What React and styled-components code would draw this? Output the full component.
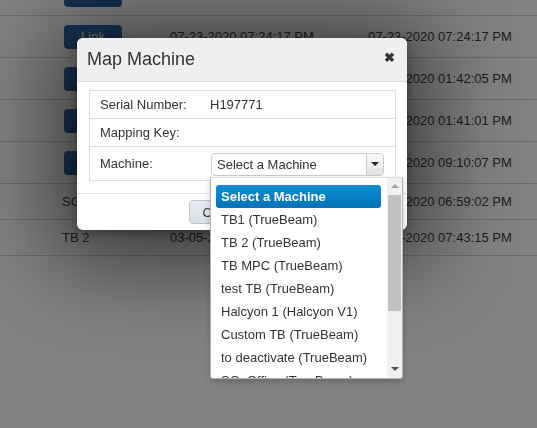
import styled, { createGlobalStyle } from 'styled-components';

const GlobalStyle = createGlobalStyle`
  html, body {
    margin: 0;
    padding: 0;
    background: #fff;
    font-family: "Liberation Sans", Arial, sans-serif;
    font-size: 13px;
    color: #333;
    overflow: hidden;
  }
`;

const Page = styled.div`
  width: 537px;
  height: 428px;
  overflow: hidden;
`;

const BgTable = styled.div`
  margin-top: -26px;
  display: flex;
  flex-direction: column;
`;

const BgRow = styled.div`
  display: grid;
  grid-template-columns: 170px 198px 1fr;
  align-items: center;
  height: ${(p) => (p.tall ? '41px' : '35px')};
  border-bottom: 1px solid #d4d4d4;
  white-space: nowrap;
  color: #3a3a3a;
`;

const BgCell = styled.div`
  padding-left: ${(p) => p.pad || 0}px;
  overflow: hidden;
`;

const LinkButton = styled.div`
  width: 58px;
  height: 24px;
  margin-left: 2px;
  border-radius: 4px;
  background: linear-gradient(#306fb0, #285f9a);
  color: #fff;
  display: flex;
  align-items: center;
  justify-content: center;
`;

const Backdrop = styled.div`
  position: fixed;
  inset: 0;
  background: rgba(0, 0, 0, 0.49);
  padding: 38px 0 0 77px;
`;

const Modal = styled.div`
  width: 330px;
  background: #fff;
  border-radius: 6px;
  box-shadow: 0 10px 90px 25px rgba(0, 0, 0, 0.55), 0 3px 12px rgba(0, 0, 0, 0.35);
`;

const ModalHeader = styled.div`
  height: 43px;
  background: #efefef;
  border-bottom: 1px solid #ddd;
  border-radius: 6px 6px 0 0;
  display: flex;
  align-items: center;
  justify-content: space-between;
  padding: 0 12px 0 10px;
`;

const Title = styled.h3`
  margin: 0;
  font-size: 18px;
  font-weight: normal;
  color: #333;
`;

const CloseX = styled.span`
  font-size: 13px;
  font-weight: bold;
  color: #333;
  margin-top: -4px;
`;

const ModalBody = styled.div`
  padding: 8px 11px 12px 12px;
  border-bottom: 1px solid #e5e5e5;
`;

const InfoTable = styled.div`
  border: 1px solid #ddd;
`;

const InfoRow = styled.div`
  display: grid;
  grid-template-columns: 116px 1fr;
  align-items: center;
  height: ${(p) => p.h}px;
  border-top: ${(p) => (p.first ? 'none' : '1px solid #ddd')};
`;

const Label = styled.div`
  padding-left: 10px;
`;

const Value = styled.div`
  padding-left: 4px;
  padding-right: 11px;
`;

const SelectWrap = styled.div`
  position: relative;
  margin-left: 1px;
  margin-top: 1px;
`;

const SelectBox = styled.div`
  height: 21px;
  border: 1px solid #ccc;
  border-radius: 4px;
  background: #fff;
  display: flex;
  align-items: center;
  justify-content: space-between;
  overflow: hidden;
`;

const SelectText = styled.span`
  padding-left: 5px;
`;

const ArrowBtn = styled.div`
  width: 16px;
  height: 100%;
  border-left: 1px solid #ccc;
  background: linear-gradient(#fafafa, #e2e2e2);
  display: flex;
  align-items: center;
  justify-content: center;
`;

const Caret = styled.div`
  width: 0;
  height: 0;
  border-left: 4px solid transparent;
  border-right: 4px solid transparent;
  border-${(p) => (p.up ? 'bottom' : 'top')}: ${(p) => p.size || 4}px solid ${(p) => p.color || '#222'};
`;

const Dropdown = styled.div`
  position: absolute;
  top: 24px;
  left: -1px;
  width: 191px;
  height: 200px;
  background: #fff;
  border: 1px solid #b5b5b5;
  border-top-color: #ddd;
  box-shadow: 0 3px 6px rgba(0, 0, 0, 0.2);
  border-radius: 0 0 3px 3px;
  display: flex;
  overflow: hidden;
  z-index: 2;
`;

const OptionList = styled.div`
  flex: 1;
  padding: 7px 6px 0 5px;
  display: flex;
  flex-direction: column;
`;

const Option = styled.div`
  height: 23px;
  flex-shrink: 0;
  display: flex;
  align-items: center;
  padding-left: 5px;
  white-space: nowrap;
  border-radius: 3px;
  color: ${(p) => (p.active ? '#fff' : '#333')};
  font-weight: ${(p) => (p.active ? 'bold' : 'normal')};
  background: ${(p) => (p.active ? 'linear-gradient(#0d8ed3, #0573b7)' : 'transparent')};
`;

const ScrollBar = styled.div`
  width: 15px;
  background: #f1f1f1;
  display: flex;
  flex-direction: column;
  align-items: center;
`;

const ScrollArrow = styled.div`
  height: 17px;
  display: flex;
  align-items: center;
  justify-content: center;
`;

const Thumb = styled.div`
  width: 13px;
  height: 116px;
  background: #c1c1c1;
`;

const Spacer = styled.div`
  flex: 1;
`;

const ModalFooter = styled.div`
  padding: 6px 0 6px 22px;
  display: flex;
  justify-content: center;
  gap: 5px;
`;

const FooterButton = styled.div`
  height: 22px;
  padding: 0 12px;
  border: 1px solid #b9c3cd;
  border-radius: 4px;
  background: linear-gradient(#e6ebf0, #d9e0e7);
  display: flex;
  align-items: center;
  color: #333;
`;

const rows = [
  { tall: true, c1: 'link', c2: '07-23-2020 07:24:10 PM', c3: '07-23-2020 07:24:10 PM' },
  { tall: true, c1: 'link', c2: '07-23-2020 07:24:17 PM', c3: '07-23-2020 07:24:17 PM' },
  { tall: true, c1: 'link', c2: '07-23-2020 01:42:05 PM', c3: '07-23-2020 01:42:05 PM' },
  { tall: true, c1: 'link', c2: '07-23-2020 01:41:01 PM', c3: '07-23-2020 01:41:01 PM' },
  { tall: true, c1: 'link', c2: '07-21-2020 09:10:07 PM', c3: '07-21-2020 09:10:07 PM' },
  { tall: false, c1: 'SG_Office', c2: '06-17-2020 06:59:02 PM', c3: '06-17-2020 06:59:02 PM' },
  { tall: false, c1: 'TB 2', c2: '03-05-2020 07:43:15 PM', c3: '03-05-2020 07:43:15 PM' },
];

const machines = [
  'TB1 (TrueBeam)',
  'TB 2 (TrueBeam)',
  'TB MPC (TrueBeam)',
  'test TB (TrueBeam)',
  'Halcyon 1 (Halcyon V1)',
  'Custom TB (TrueBeam)',
  'to deactivate (TrueBeam)',
  'SG_Office (TrueBeam)',
];

export default function App() {
  return (
    <Page>
      <GlobalStyle />
      {/* table behind the modal */}
      <BgTable>
        {rows.map((r, i) => (
          <BgRow key={i} tall={r.tall}>
            <BgCell pad={62}>
              {r.c1 === 'link' ? <LinkButton>Link</LinkButton> : r.c1}
            </BgCell>
            <BgCell>{r.c2}</BgCell>
            <BgCell>{r.c3}</BgCell>
          </BgRow>
        ))}
      </BgTable>

      <Backdrop>
        <Modal>
          <ModalHeader>
            <Title>Map Machine</Title>
            <CloseX>✖</CloseX>
          </ModalHeader>
          <ModalBody>
            <InfoTable>
              <InfoRow first h={27}>
                <Label>Serial Number:</Label>
                <Value>H197771</Value>
              </InfoRow>
              <InfoRow h={27}>
                <Label>Mapping Key:</Label>
                <Value />
              </InfoRow>
              <InfoRow h={33}>
                <Label>Machine:</Label>
                <Value>
                  <SelectWrap>
                    <SelectBox>
                      <SelectText>Select a Machine</SelectText>
                      <ArrowBtn>
                        <Caret />
                      </ArrowBtn>
                    </SelectBox>
                    <Dropdown>
                      <OptionList>
                        <Option active>Select a Machine</Option>
                        {machines.map((m) => (
                          <Option key={m}>{m}</Option>
                        ))}
                      </OptionList>
                      <ScrollBar>
                        <ScrollArrow>
                          <Caret up size={4} color="#a3a3a3" />
                        </ScrollArrow>
                        <Thumb />
                        <Spacer />
                        <ScrollArrow>
                          <Caret size={4} color="#505050" />
                        </ScrollArrow>
                      </ScrollBar>
                    </Dropdown>
                  </SelectWrap>
                </Value>
              </InfoRow>
            </InfoTable>
          </ModalBody>
          <ModalFooter>
            <FooterButton>Cancel</FooterButton>
            <FooterButton>Save</FooterButton>
          </ModalFooter>
        </Modal>
      </Backdrop>
    </Page>
  );
}
